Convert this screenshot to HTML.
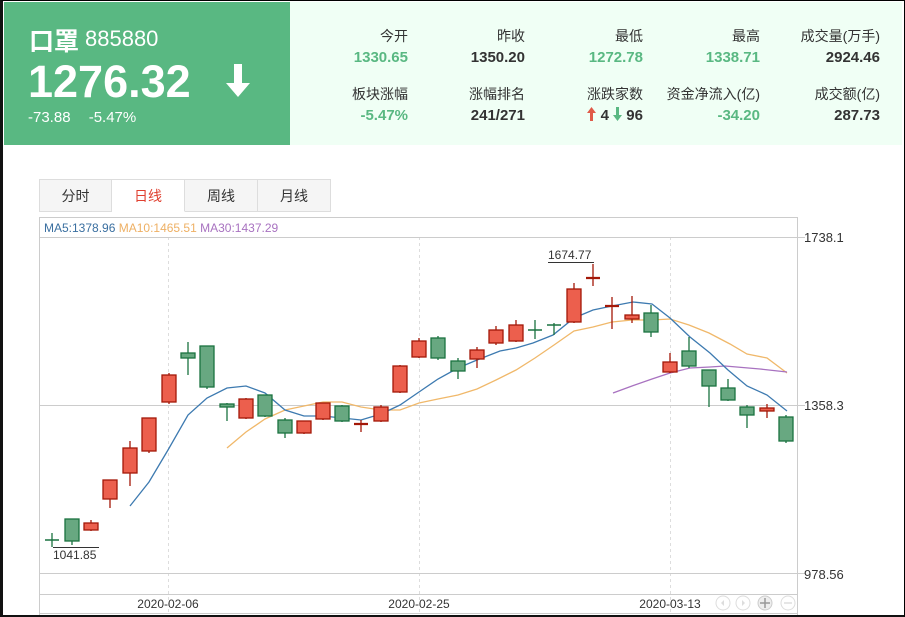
<!DOCTYPE html>
<html><head><meta charset="utf-8"><style>
*{margin:0;padding:0;box-sizing:border-box}
body{width:905px;height:617px;overflow:hidden;background:#fff;font-family:"Liberation Sans","Noto Sans CJK SC",sans-serif;position:relative}
.frame{position:absolute;left:0;top:0;width:905px;height:617px;border:1px solid #000;border-left:3px solid #111;border-bottom:2px solid #111}
.gp{position:absolute;left:4px;top:2px;width:286px;height:143px;background:#59b882;color:#fff}
.rp{position:absolute;left:290px;top:2px;width:612px;height:143px;background:#f0fff5}
.name{position:absolute;left:25px;top:20px;font-size:25px;font-weight:bold}
.code{position:absolute;left:81px;top:24px;font-size:22px}
.price{position:absolute;left:24px;top:54px;font-size:45px;font-weight:bold}
.chg{position:absolute;left:24px;top:107px;font-size:15px;word-spacing:14px}
.arrow{position:absolute;left:222px;top:62px}
.l,.v{position:absolute;text-align:right;width:120px;font-size:14px}
.l{color:#333}
.v{font-weight:bold;color:#333;font-size:15px}
.v.g{color:#59b882}
.tabs{position:absolute;left:39px;top:179px;height:33px;display:flex}
.tab{width:73px;height:33px;border:1px solid #ddd;border-left:none;background:#f5f5f5;font-size:14px;color:#333;text-align:center;line-height:32px}
.tab:first-child{border-left:1px solid #ddd}
.tab.a{background:#fff;color:#e04030;border-bottom-color:#fff}
</style></head><body>
<div class="gp">
<div class="name">口罩</div><div class="code">885880</div>
<div class="price">1276.32</div>
<svg class="arrow" width="24" height="34" viewBox="0 0 24 34"><path d="M8 0h8v19h8L12 33 0 19h8z" fill="#fff"/></svg>
<div class="chg">-73.88 -5.47%</div>
</div>
<div class="rp"></div>
<div class="l" style="left:288px;top:26px">今开</div><div class="v g" style="left:288px;top:49px">1330.65</div>
<div class="l" style="left:405px;top:26px">昨收</div><div class="v" style="left:405px;top:49px">1350.20</div>
<div class="l" style="left:523px;top:26px">最低</div><div class="v g" style="left:523px;top:49px">1272.78</div>
<div class="l" style="left:640px;top:26px">最高</div><div class="v g" style="left:640px;top:49px">1338.71</div>
<div class="l" style="top:26px;width:160px;left:720px">成交量(万手)</div><div class="v" style="left:760px;top:49px">2924.46</div>
<div class="l" style="left:288px;top:84px">板块涨幅</div><div class="v g" style="left:288px;top:107px">-5.47%</div>
<div class="l" style="left:405px;top:84px">涨幅排名</div><div class="v" style="left:405px;top:107px">241/271</div>
<div class="l" style="left:523px;top:84px">涨跌家数</div>
<div class="v" style="left:523px;top:107px"><svg width="9" height="14" viewBox="0 0 9 14" style="vertical-align:-1px"><path d="M4.5 0L9 6H6v8H3V6H0z" fill="#e05a48"/></svg> 4 <svg width="9" height="14" viewBox="0 0 9 14" style="vertical-align:-1px"><path d="M3 0h3v8h3l-4.5 6L0 8h3z" fill="#59b882"/></svg> 96</div>
<div class="l" style="left:600px;top:84px;width:160px">资金净流入(亿)</div><div class="v g" style="left:640px;top:107px">-34.20</div>
<div class="l" style="left:760px;top:84px">成交额(亿)</div><div class="v" style="left:760px;top:107px">287.73</div>
<div class="tabs"><div class="tab">分时</div><div class="tab a">日线</div><div class="tab">周线</div><div class="tab">月线</div></div>
<svg style="position:absolute;left:0;top:0" width="905" height="617" font-family="Liberation Sans, sans-serif">
<rect x="39.5" y="217.5" width="758" height="400" fill="none" stroke="#ccc"/>
<g stroke="#ddd" stroke-dasharray="3,3"><line x1="168.5" y1="237" x2="168.5" y2="613"/><line x1="419.5" y1="237" x2="419.5" y2="613"/><line x1="670.5" y1="237" x2="670.5" y2="613"/></g>
<g stroke="#ccc"><line x1="40" y1="237.5" x2="805" y2="237.5"/><line x1="40" y1="405.5" x2="805" y2="405.5"/><line x1="40" y1="573.5" x2="805" y2="573.5"/><line x1="40" y1="594.5" x2="797" y2="594.5"/><line x1="40" y1="613.5" x2="797" y2="613.5"/></g>
<text x="44" y="232" font-size="12" fill="#3a6fa0">MA5:1378.96 <tspan fill="#eeb064">MA10:1465.51</tspan> <tspan fill="#a872c0">MA30:1437.29</tspan></text>
<g font-size="13" fill="#333"><text x="804" y="242">1738.1</text><text x="804" y="410">1358.3</text><text x="804" y="579">978.56</text></g>
<g font-size="12" fill="#333" text-anchor="middle"><text x="168" y="608">2020-02-06</text><text x="419" y="608">2020-02-25</text><text x="670" y="608">2020-03-13</text></g>
<g fill="#fff" stroke="#ddd"><circle cx="723" cy="603" r="7"/><circle cx="743" cy="603" r="7"/><circle cx="765" cy="603" r="7" fill="#eee" stroke="#ccc"/><circle cx="788" cy="603" r="7"/></g>
<path d="M721 603l3-3v6zM745 603l-3-3v6z" fill="#ddd"/>
<path d="M765 598v10M760 603h10" stroke="#999" stroke-width="1.5"/><path d="M784 603h8" stroke="#ccc"/>
<text x="53" y="559" font-size="12" fill="#333">1041.85</text><line x1="53" y1="547.5" x2="99" y2="547.5" stroke="#333"/>
<text x="548" y="259" font-size="12" fill="#333">1674.77</text><line x1="548" y1="262.5" x2="594" y2="262.5" stroke="#333"/>
<polyline fill="none" stroke="#f0b86a" stroke-width="1.3" points="227,448 246,432 265,419 285,410 304,406 323,402 342,402 361,407 381,410 400,410 419,403 438,399 458,395 477,389 496,380 516,370 535,358 554,345 574,331 593,327 612,322 632,320 652,320 670,319 689,325 709,333 730,344 747,354 767,358 787,373"/>
<polyline fill="none" stroke="#a872c0" stroke-width="1.3" points="613,393 632,386 652,379 670,373 690,368 710,367 725,366 760,369 787,372"/>
<polyline fill="none" stroke="#3d7ab0" stroke-width="1.3" points="130,506 149,482 168,450 188,415 207,398 227,388 246,386 265,393 285,410 304,416 323,416 342,418 361,420 381,414 400,405 419,392 438,379 458,368 477,360 500,351 516,348 533,343 553,335 574,318 593,310 612,306 633,302 652,304 670,318 690,337 710,353 728,370 747,386 767,395 787,411"/>
<g stroke="#a31808" fill="#ec5f4d" stroke-width="1.3">
<path d="M91 520v11M110 480v28M130 441v45M149 418v35M169 373v31M246 398v21M304 421v13M323 403v17M361 420v12M381 405v17M400 365v28M419 338v20M477 347v21M496 326v19M516 320v22M574 283v40M593 264v22M612 297v32M632 296v27M670 353v20M767 404v14"/>
<rect x="84" y="523" width="14" height="7"/><rect x="103" y="480" width="14" height="19"/><rect x="123" y="448" width="14" height="25"/><rect x="142" y="418" width="14" height="33"/><rect x="162" y="375" width="14" height="27"/><rect x="239" y="399" width="14" height="19"/><rect x="297" y="421" width="14" height="12"/><rect x="316" y="403" width="14" height="16"/><rect x="374" y="407" width="14" height="14"/><rect x="393" y="366" width="14" height="26"/><rect x="412" y="341" width="14" height="16"/><rect x="470" y="350" width="14" height="9"/><rect x="489" y="330" width="14" height="13"/><rect x="509" y="325" width="14" height="16"/><rect x="567" y="289" width="14" height="33"/><rect x="625" y="315" width="14" height="4"/><rect x="663" y="362" width="14" height="10"/><rect x="760" y="408" width="14" height="3"/>
<path d="M354 424h14M586 278h14M605 306h14" stroke-width="2.2"/>
</g>
<g stroke="#1a7240" fill="#68a881" stroke-width="1.3">
<path d="M52 533v14M72 519v26M188 342v33M207 346v43M227 403v18M265 395v22M285 418v20M342 405v17M438 336v24M458 358v21M535 320v19M554 323v12M651 305v32M689 337v31M709 370v37M728 379v22M747 405v23M786 415v28"/>
<path d="M45 540h14M528 330h14M547 325h14" stroke-width="1.6"/>
<rect x="65" y="519" width="14" height="22"/><rect x="181" y="353" width="14" height="5"/><rect x="200" y="346" width="14" height="41"/><rect x="220" y="404" width="14" height="3"/><rect x="258" y="395" width="14" height="21"/><rect x="278" y="420" width="14" height="13"/><rect x="335" y="406" width="14" height="15"/><rect x="431" y="338" width="14" height="20"/><rect x="451" y="361" width="14" height="10"/><rect x="644" y="313" width="14" height="19"/><rect x="682" y="351" width="14" height="15"/><rect x="702" y="370" width="14" height="16"/><rect x="721" y="388" width="14" height="12"/><rect x="740" y="407" width="14" height="8"/><rect x="779" y="417" width="14" height="24"/>
</g>
</svg>
<div class="frame"></div>
</body></html>
